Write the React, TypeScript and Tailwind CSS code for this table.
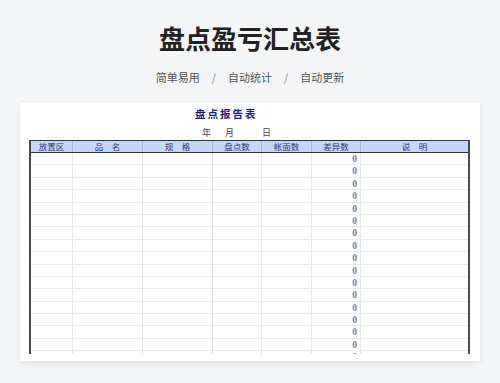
const cols = [
  { label: '放置区', w: 'w-[42px]' },
  { label: '品\u3000名', w: 'w-[70px]' },
  { label: '规\u3000格', w: 'w-[70px]' },
  { label: '盘点数', w: 'w-[49px]' },
  { label: '帐面数', w: 'w-[50px]' },
  { label: '差异数', w: 'w-[49px]' },
  { label: '说\u3000明', w: 'flex-1' },
];

const rows = Array.from({ length: 17 }, (_, i) => i);

export default function App() {
  return (
    <div className="w-[500px] h-[383px] overflow-hidden bg-[#f4f5f7] font-['Noto_Sans_CJK_SC',sans-serif]">
      <h1 className="pt-[24px] text-center text-[26px] leading-[28px] font-bold text-[#222]">
        盘点盈亏汇总表
      </h1>
      <div className="mt-[18px] flex justify-center items-center gap-[12px] text-[11px] leading-[14px] text-[#555]">
        <span>简单易用</span>
        <span className="text-[#888]">/</span>
        <span>自动统计</span>
        <span className="text-[#888]">/</span>
        <span>自动更新</span>
      </div>

      <div className="mt-[19px] mx-[20px] h-[258px] bg-white shadow-[0_2px_6px_rgba(0,0,0,0.08)] flex flex-col pl-[9px] pr-[10px] pb-[7px]">
        <div className="h-[21px] pt-[4px] pl-[166px] text-[10.5px] leading-[14px] font-bold text-[#1c1c7c] tracking-[2px]">
          盘点报告表
        </div>
        <div className="h-[16px] relative text-[9px] leading-[12px] text-[#444] font-['Liberation_Serif','Noto_Sans_CJK_SC',serif]">
          <span className="absolute left-[173px] top-[3px]">年</span>
          <span className="absolute left-[196px] top-[3px]">月</span>
          <span className="absolute left-[233px] top-[3px]">日</span>
        </div>
        <div className="flex-1 overflow-hidden border-x-2 border-[#4a4a4a] border-t border-t-[#333]">
          <div className="flex h-[12px] bg-[#c6d6f6] border-b border-[#333] text-[8.5px] leading-[11px] text-[#34347a]">
            {cols.map((c, i) => (
              <div
                key={i}
                className={`${c.w} shrink-0 text-center ${i < cols.length - 1 ? 'border-r border-[#aab8dc]' : ''}`}
              >
                {c.label}
              </div>
            ))}
          </div>
          {rows.map((r) => (
            <div key={r} className="flex h-[12.4px] border-b border-[#ececec]">
              {cols.map((c, i) => (
                <div
                  key={i}
                  className={`${c.w} shrink-0 ${i < cols.length - 1 ? 'border-r border-[#e6e6e6]' : ''} ${
                    i === 5 ? "text-right pr-[3px] text-[9.5px] leading-[12px] text-[#7a74ac] font-bold font-['Liberation_Serif',serif]" : ''
                  }`}
                >
                  {i === 5 ? '0' : ''}
                </div>
              ))}
            </div>
          ))}
        </div>
      </div>
    </div>
  );
}
